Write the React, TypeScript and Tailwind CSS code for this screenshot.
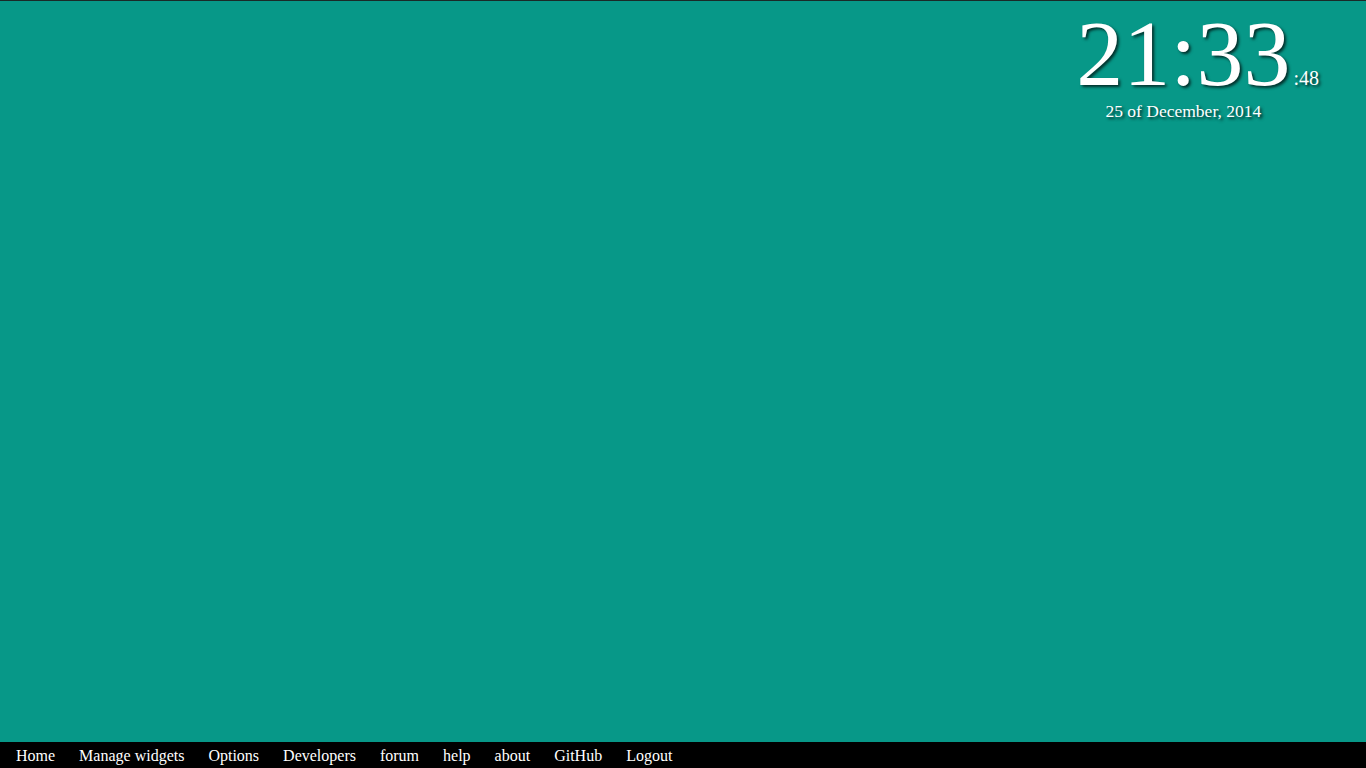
const links = ["Home", "Manage widgets", "Options", "Developers", "forum", "help", "about", "GitHub", "Logout"];

function Clock() {
  return (
    <div className="flex items-baseline text-white [text-shadow:2px_2px_3px_rgba(0,0,0,0.7)]">
      <div className="flex flex-col items-center">
        <span className="text-[94px] leading-none">21:33</span>
        <span className="mt-[3px] text-[17.5px] leading-none">25 of December, 2014</span>
      </div>
      <span className="ml-[3px] text-[20px] leading-none">:48</span>
    </div>
  );
}

export default function App() {
  return (
    <div className="flex h-screen flex-col border-t border-[#1a2a28] bg-[#079888] font-['Liberation_Serif',serif]">
      <main className="flex flex-1 justify-end pr-[47px] pt-[5px]">
        <div>
          <Clock />
        </div>
      </main>
      <nav className="flex h-[26px] items-center gap-[24px] bg-black pl-[16px] pt-[2px] text-[16px] text-white">
        {links.map((l) => (
          <a key={l} href="#" className="leading-none">
            {l}
          </a>
        ))}
      </nav>
    </div>
  );
}
